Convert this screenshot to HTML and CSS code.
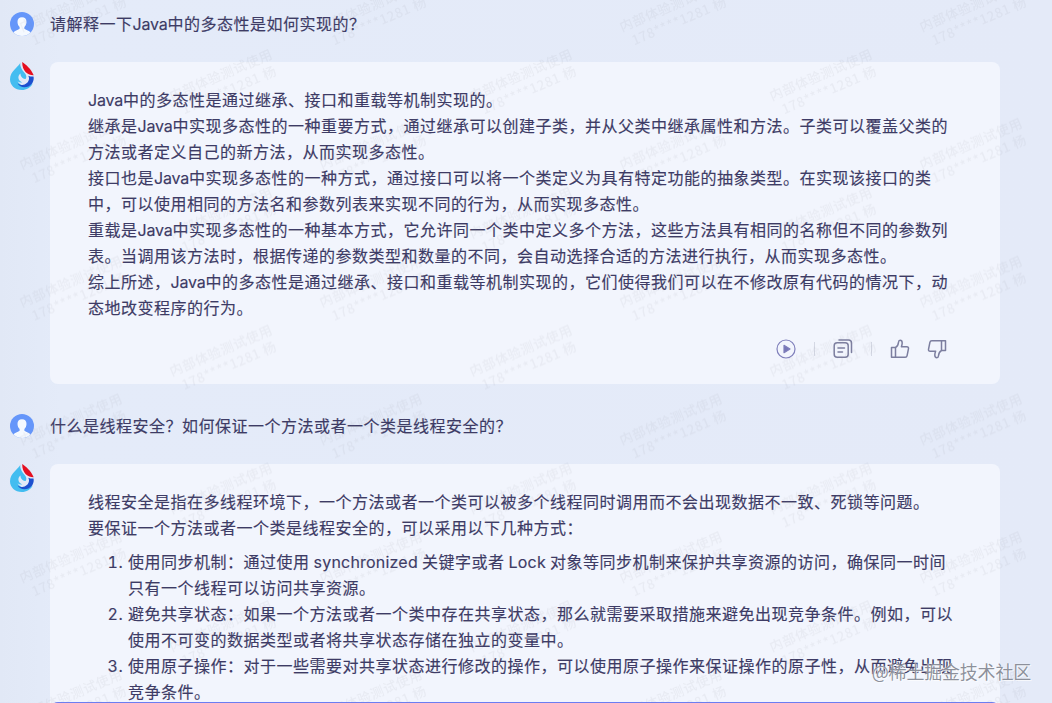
FILE: index.html
```html
<!DOCTYPE html>
<html lang="zh-CN">
<head>
    <meta charset="UTF-8">
    <meta name="viewport" content="width=device-width, initial-scale=1.0">
    <title>Chat</title>
    <link rel="stylesheet" href="styles.css">
</head>
<body>

<svg class="sprite" width="0" height="0">
    <symbol id="user" viewBox="0 0 24 24">
        <clipPath id="userClip"><circle cx="12" cy="12" r="12"/></clipPath>
        <circle cx="12" cy="12" r="12" fill="#6596fa"/>
        <g clip-path="url(#userClip)" fill="#f5f9ff">
            <path d="M12 5.200c-3 0-4.600 2-4.500 4.800.1 2.300.9 4 2.100 5v1.800C7.500 18.300 4.800 18.500 3.500 20.500L3 24h18l-.5-3.500c-1.300-2-4-2.200-6.100-3.700V15c1.200-1 2-2.700 2.100-5 .1-2.800-1.500-4.800-4.500-4.800z"/>
        </g>
    </symbol>
    <symbol id="spark" viewBox="0 0 24 28">
        <path d="M10.300.6C9.500 4.500 0 9 0 17.200 0 23.300 5 28 11.800 28c4.700 0 9-2.500 10.900-6.500-5.200 3.700-12.500 2.800-15.200-2.300 1.500 1.200 3.200 1.700 4.800 1.200-2.500-1-3.700-2.700-3.900-4.600-.1-2 .8-3.500 2.200-4.300-.3 1.800.4 3.100 1.700 4.200 1.100.9 2.200 1.500 3.300 1.400 1.200-1.500 1-3.800-.7-5.800C12.300 8.500 9.800 5 10.300.6z" fill="#43bdf0"/>
        <path d="M18.300 13.700c2.500 5-2 9.300-6 9.300-1.800 0-3.500-.7-4.800-1.800 2.700 5.500 10.500 5.300 14.400.6 1.500-2.200 2.200-4.800 1.600-7.300-1.600.1-3.500 0-5.200-.8z" fill="#1d50cf"/>
        <path d="M12.200 0c3.600 2.500 8.900 6.800 11.500 13.200-5.200.2-11.700-3.400-11.500-13.200z" fill="#e50f20"/>
    </symbol>
    <symbol id="thumb" viewBox="0 0 20 20">
        <path d="M1.500 8.500h4v9.700h-4zM5.500 8.500C7.800 7.300 8.300 5.500 8.500 3.200c.1-1.200.7-1.900 1.600-1.900 1.300 0 2.100 1.100 2.100 2.700 0 1.300-.3 2.300-.8 3.700h5.400c1.200 0 1.900.8 1.700 1.900l-1.400 7c-.2 1-.9 1.600-1.900 1.600H5.500"/>
    </symbol>
</svg>

<main class="chat">
    <section class="question">
        <svg class="avatar"><use href="#user"/></svg>
        <p>请解释一下<span class="en java">Java</span>中的多态性是如何实现的？</p>
    </section>

    <section class="answer">
        <svg class="logo"><use href="#spark"/></svg>
        <div class="bubble">
            <p><span class="en java">Java</span>中的多态性是通过继承、接口和重载等机制实现的。</p>
            <p>继承是<span class="en java">Java</span>中实现多态性的一种重要方式，通过继承可以创建子类，并从父类中继承属性和方法。子类可以覆盖父类的<br>方法或者定义自己的新方法，从而实现多态性。</p>
            <p>接口也是<span class="en java">Java</span>中实现多态性的一种方式，通过接口可以将一个类定义为具有特定功能的抽象类型。在实现该接口的类<br>中，可以使用相同的方法名和参数列表来实现不同的行为，从而实现多态性。</p>
            <p>重载是<span class="en java">Java</span>中实现多态性的一种基本方式，它允许同一个类中定义多个方法，这些方法具有相同的名称但不同的参数列<br>表。当调用该方法时，根据传递的参数类型和数量的不同，会自动选择合适的方法进行执行，从而实现多态性。</p>
            <p>综上所述，<span class="en java">Java</span>中的多态性是通过继承、接口和重载等机制实现的，它们使得我们可以在不修改原有代码的情况下，动<br>态地改变程序的行为。</p>
            <div class="actions">
                <svg class="icon play" viewBox="0 0 20 20">
                    <circle cx="10" cy="10" r="9"/>
                    <path class="solid" d="M8 6.300l6 3.700-6 3.700z"/>
                </svg>
                <i class="divider"></i>
                <svg class="icon" viewBox="0 0 20 20">
                    <path d="M6 1h9.500a3 3 0 0 1 3 3v9.500"/>
                    <rect x="1.200" y="3.700" width="14" height="14.600" rx="3"/>
                    <path d="M5 9h6.500M5 13h4.500"/>
                </svg>
                <i class="divider"></i>
                <svg class="icon"><use href="#thumb"/></svg>
                <svg class="icon down"><use href="#thumb"/></svg>
            </div>
        </div>
    </section>

    <section class="question">
        <svg class="avatar"><use href="#user"/></svg>
        <p>什么是线程安全？如何保证一个方法或者一个类是线程安全的？</p>
    </section>

    <section class="answer">
        <svg class="logo"><use href="#spark"/></svg>
        <div class="bubble">
            <p>线程安全是指在多线程环境下，一个方法或者一个类可以被多个线程同时调用而不会出现数据不一致、死锁等问题。</p>
            <p>要保证一个方法或者一个类是线程安全的，可以采用以下几种方式：</p>
            <ol>
                <li>使用同步机制：通过使用 <span class="en">synchronized</span> 关键字或者 <span class="en">Lock</span> 对象等同步机制来保护共享资源的访问，确保同一时间<br>只有一个线程可以访问共享资源。</li>
                <li>避免共享状态：如果一个方法或者一个类中存在共享状态，那么就需要采取措施来避免出现竞争条件。例如，可以<br>使用不可变的数据类型或者将共享状态存储在独立的变量中。</li>
                <li>使用原子操作：对于一些需要对共享状态进行修改的操作，可以使用原子操作来保证操作的原子性，从而避免出现<br>竞争条件。</li>
            </ol>
        </div>
    </section>
</main>

<div class="input-box"></div>

<svg class="watermark" width="1052" height="703">
    <defs>
        <pattern id="mark" width="300" height="137.8" patternUnits="userSpaceOnUse" x="0" y="-25">
            <g id="markText" transform="translate(22 57) rotate(-23)">
                <text x="0" y="0">内部体验测试使用</text>
                <text x="6" y="17">178****1281 杨</text>
            </g>
        </pattern>
        <pattern id="markShift" width="300" height="137.8" patternUnits="userSpaceOnUse" x="150" y="44">
            <use href="#markText"/>
        </pattern>
    </defs>
    <rect width="1052" height="703" fill="url(#mark)"/>
    <rect width="1052" height="703" fill="url(#markShift)"/>
</svg>

<div class="community">@稀土掘金技术社区</div>

</body>
</html>
```

FILE: styles.css
```css
* {
    box-sizing: border-box;
}
body {
    margin: 0;
    height: 703px;
    overflow: hidden;
    position: relative;
    background: linear-gradient(90deg, #e1e8f6 0, #e4ebf9 60px, #e4eaf8 100%);
    color: #3d3b65;
    font-family: "Noto Sans CJK SC", sans-serif;
    font-size: 16px;
    line-height: 26px;
    letter-spacing: 0.5px;
}
p {
    margin: 0;
    white-space: nowrap;
}
.en {
    font-family: Inter, sans-serif;
    letter-spacing: 0.2px;
    line-height: 1;
}
.java {
    letter-spacing: -0.2px;
}
.sprite {
    position: absolute;
}
.chat {
    height: 703px;
    overflow: hidden;
    padding: 11px 52px 0 10px;
    -webkit-text-stroke: 0.15px #3d3b65;
}
.question {
    display: flex;
    align-items: center;
    gap: 16px;
    height: 26px;
}
.question p {
    padding-bottom: 2px;
}
.avatar {
    width: 24px;
    height: 24px;
    flex: none;
}
.answer {
    display: flex;
    align-items: flex-start;
    gap: 16px;
    margin: 25px 0 29px;
}
.logo {
    width: 24px;
    height: 28px;
    flex: none;
}
.bubble {
    flex: 1;
    height: 322px;
    padding: 24px 38px;
    border-radius: 8px;
    background: #f2f5fd;
}
.actions {
    display: flex;
    align-items: center;
    justify-content: flex-end;
    height: 20px;
    margin: 19px 15px 0 0;
}
.icon {
    width: 20px;
    height: 20px;
    fill: none;
    stroke: #7c7e9f;
    stroke-width: 1.5;
    stroke-linejoin: round;
    stroke-linecap: round;
}
.play {
    stroke: #7f7fbb;
    stroke-width: 1.2;
}
.solid {
    fill: #7777b8;
}
.divider {
    width: 1px;
    height: 14px;
    margin: 0 18px;
    background: #d4d8e4;
}
.down {
    margin-left: 17px;
    transform: rotate(180deg);
}
ol {
    margin: 8px 0 0;
    padding-left: 40px;
}
li {
    white-space: nowrap;
}
li::marker {
    font-family: Inter, sans-serif;
}
.input-box {
    position: absolute;
    left: 50px;
    bottom: 0;
    width: 950px;
    height: 8px;
    border-top: 2px solid #6c7df2;
    border-radius: 8px 8px 0 0;
    clip-path: inset(0 3px 6px 3px);
    transform: translateY(7px);
}
.watermark {
    position: absolute;
    left: 0;
    top: 0;
    pointer-events: none;
}
.watermark text {
    fill: #85888f;
    fill-opacity: 0.09;
    font-size: 13.3px;
    font-weight: 500;
}
.community {
    position: absolute;
    right: 21px;
    top: 658px;
    color: rgba(120, 124, 137, 0.85);
    font-size: 18px;
    letter-spacing: -0.2px;
    white-space: nowrap;
    text-shadow: 0 0 1px #fff, 1px 1px 0 rgba(255, 255, 255, 0.7);
}
```
